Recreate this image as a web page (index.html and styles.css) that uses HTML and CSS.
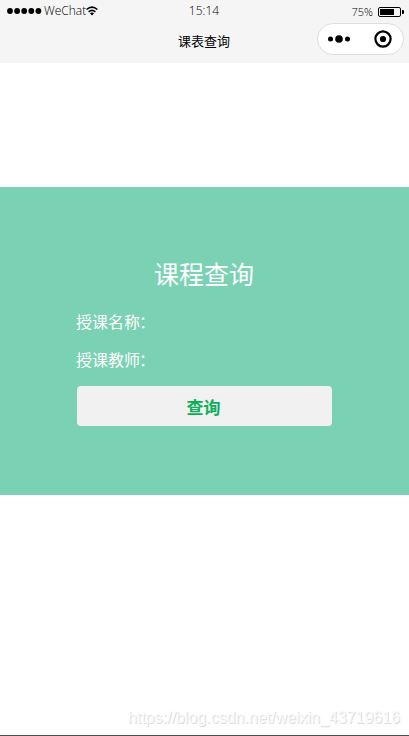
FILE: index.html
```
<!DOCTYPE html>
<html lang="zh-CN">
<head>
<meta charset="utf-8">
<title>课表查询</title>
<link rel="stylesheet" href="styles.css">
</head>
<body>
<header class="top">
  <div class="status">
    <div class="carrier">
      <svg class="signal" width="35" height="6" viewBox="0 0 35 6"><circle cx="3" cy="3" r="2.9"/><circle cx="10.1" cy="3" r="2.9"/><circle cx="17.2" cy="3" r="2.9"/><circle cx="24.3" cy="3" r="2.9"/><circle cx="31.4" cy="3" r="2.9"/></svg>
      <span class="network">WeChat</span>
      <svg class="wifi" width="12" height="10" viewBox="0 0 12 10"><path d="M.6 3.5Q6-1.1 11.4 3.5M2.6 5.8Q6 3 9.4 5.8" fill="none" stroke="#000" stroke-width="1.6"/><path d="M3.9 7.3Q6 5.9 8.1 7.3L6 9.5Z"/></svg>
    </div>
    <span class="time">15:14</span>
    <div class="power">
      <span class="percent">75%</span>
      <svg width="26" height="10" viewBox="0 0 26 10"><rect x=".5" y=".5" width="22" height="9" rx="1.5" fill="none" stroke="#000"/><rect x="2" y="2" width="14" height="6"/><path d="M24 3h1q1 0 1 1v2q0 1-1 1h-1z"/></svg>
    </div>
  </div>
  <div class="nav">
    <h1 class="nav-title">课表查询</h1>
    <div class="capsule">
      <svg width="22" height="8" viewBox="0 0 22 8"><circle cx="2.5" cy="4" r="2.5"/><circle cx="11" cy="4" r="3.8"/><circle cx="19.5" cy="4" r="2.5"/></svg>
      <svg width="18" height="18" viewBox="0 0 18 18"><circle cx="9" cy="9" r="7.6" fill="none" stroke="#000" stroke-width="2.2"/><circle cx="9" cy="9" r="3.1"/></svg>
    </div>
  </div>
</header>
<main class="panel">
  <h2 class="title">课程查询</h2>
  <div class="field">授课名称<span class="colon">：</span></div>
  <div class="field">授课教师<span class="colon">：</span></div>
  <button class="submit">查询</button>
</main>
<footer class="watermark">https://blog.csdn.net/weixin_43719616</footer>
</body>
</html>
```
FILE: styles.css
```
* { box-sizing: border-box; }
body {
  margin: 0;
  height: 736px;
  display: flex;
  flex-direction: column;
  overflow: hidden;
  background: #fff;
  border-bottom: 1px solid #505050;
  font-family: "Noto Sans CJK SC", sans-serif;
}
svg { display: block; flex: none; }
.top { height: 63px; flex: none; background: #f5f5f5; }
.status {
  height: 20px;
  display: grid;
  grid-template-columns: 1fr auto 1fr;
  align-items: center;
  padding: 0 5px 0 7px;
  font-family: "Open Sans", sans-serif;
  font-size: 12px;
  font-weight: 300;
  line-height: 20px;
  color: #000;
}
.carrier, .power { display: flex; align-items: center; }
.carrier { padding-top: 1px; }
.signal, .wifi { margin-top: -2px; }
.network { margin: -1px 0 0 2px; }
.time { margin: -1px 3px 0 0; }
.power { justify-content: flex-end; gap: 5px; padding-top: 2px; font-size: 11px; }
.nav {
  height: 43px;
  display: grid;
  grid-template-columns: 1fr auto 1fr;
  padding: 3px 5px 0 0;
}
.nav-title {
  grid-column: 2;
  margin: 5px 0 0 4px;
  font-size: 13px;
  font-weight: 400;
  line-height: 26px;
}
.capsule {
  justify-self: end;
  width: 87px;
  height: 32px;
  display: flex;
  align-items: center;
  justify-content: space-between;
  padding: 0 11.5px 0 10px;
  border: 1px solid #dedede;
  border-radius: 16px;
  background: #fff;
}
.panel {
  height: 308px;
  flex: none;
  margin-top: 124px;
  padding: 66px 77px 0 76px;
  background: #7bd1b3;
  color: #fff;
}
.title {
  margin: 0 0 10px;
  font-size: 25px;
  font-weight: 400;
  line-height: 40px;
  text-align: center;
}
.field { height: 38px; font-size: 16px; line-height: 37px; }
.colon { margin-left: -1px; }
.submit {
  display: block;
  width: 255px;
  height: 40px;
  margin: 7px 0 0 1px;
  padding: 1px 2px 0 0;
  border: 0;
  border-radius: 4px;
  background: #f1f1f1;
  color: #0caf59;
  font: 700 17px/40px "Noto Sans CJK SC", sans-serif;
}
.watermark {
  margin: auto 9px 5px 0;
  font: 16px/24px "Liberation Sans", sans-serif;
  text-align: right;
  color: #fafafa;
  text-shadow: 1px 1px 0 #dcdcdc;
}
```
